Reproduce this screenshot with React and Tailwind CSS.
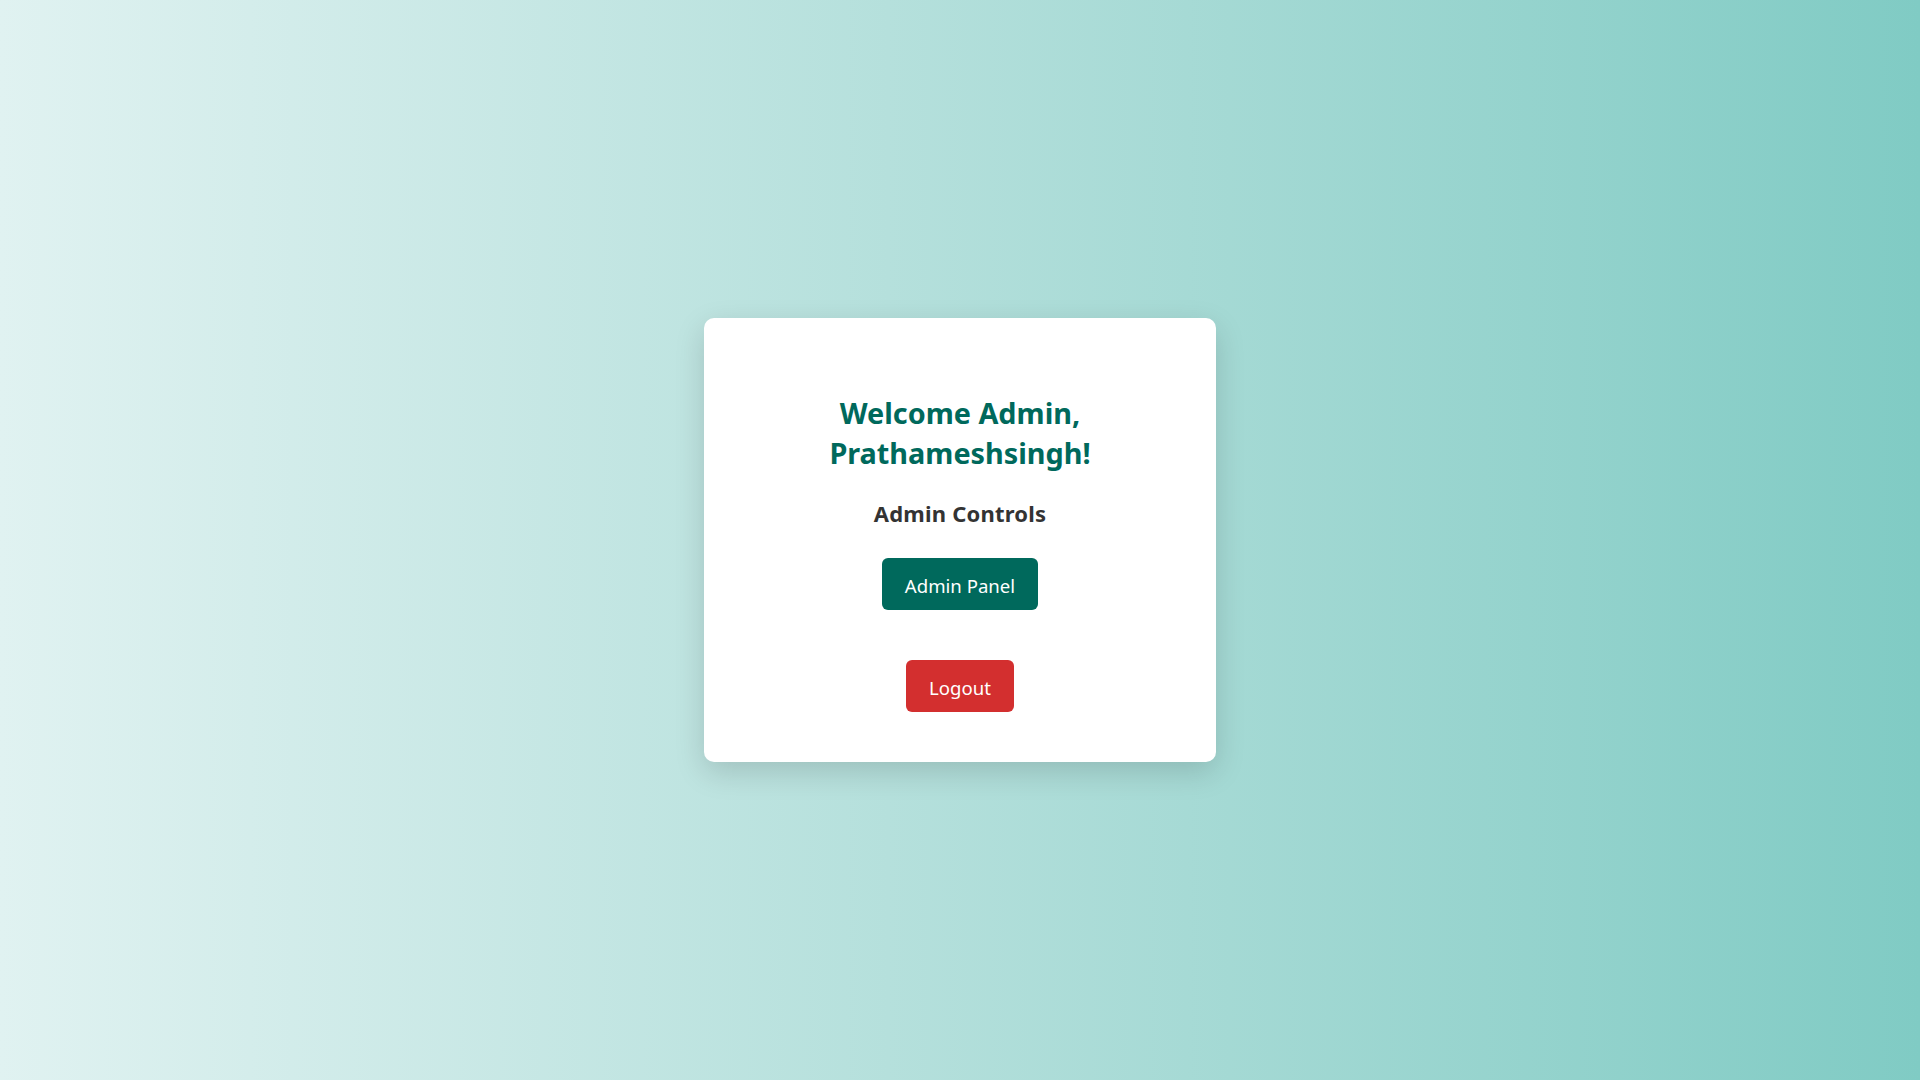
export default function App() {
  return (
    <div
      className="min-h-screen w-full flex items-center justify-center bg-gradient-to-r from-[#e0f2f1] to-[#80cbc4]"
      style={{ fontFamily: '"Noto Sans", "Open Sans", sans-serif' }}
    >
      <div className="w-[512px] h-[444px] bg-white rounded-[10px] shadow-[0_10px_30px_rgba(0,0,0,0.15)] flex flex-col items-center pt-[75px] pb-[50px]">
        <h2 className="text-[28.8px] leading-[40px] font-bold text-[#00695c] text-center">
          Welcome Admin,
          <br />
          Prathameshsingh!
        </h2>
        <h3 className="mt-[26px] text-[22px] leading-[28px] font-bold text-[#333333] tracking-[0.2px]">
          Admin Controls
        </h3>
        <button className="mt-[31px] h-[52px] px-[23px] pt-[4px] rounded-[6px] bg-[#00695c] text-white text-[18.6px]">
          Admin Panel
        </button>
        <button className="mt-[50px] h-[52px] px-[23px] pt-[4px] rounded-[6px] bg-[#d32f2f] text-white text-[18.6px]">
          Logout
        </button>
      </div>
    </div>
  );
}
